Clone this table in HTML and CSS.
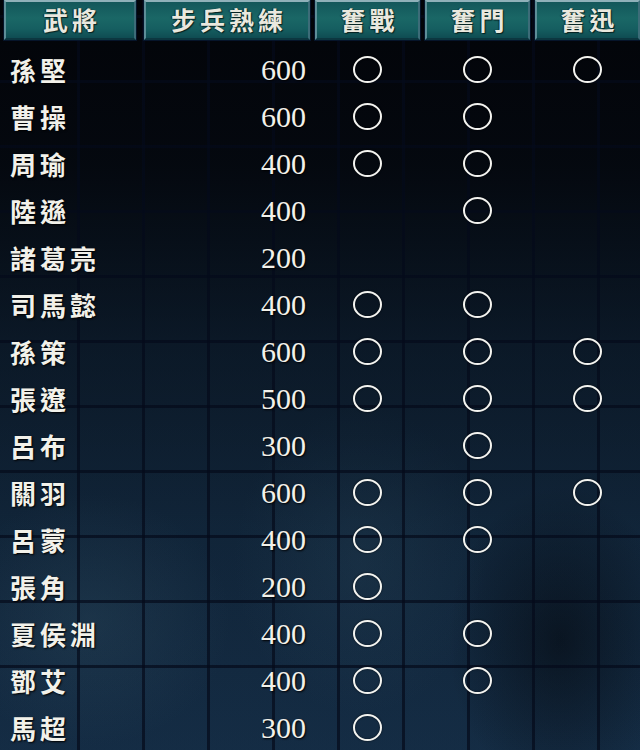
FILE: index.html
```html
<!DOCTYPE html>
<html lang="zh-Hant">
<head>
<meta charset="utf-8">
<title>步兵熟練</title>
<link rel="stylesheet" href="styles.css">
</head>
<body>
<div class="board">
  <div class="table">
    <div class="tab tab-first">武將</div>
    <div class="tab">步兵熟練</div>
    <div class="tab">奮戰</div>
    <div class="tab">奮門</div>
    <div class="tab">奮迅</div>

    <div class="name">孫堅</div><div class="num">600</div><div class="mark"><span class="ring"></span></div><div class="mark"><span class="ring"></span></div><div class="mark"><span class="ring"></span></div>
    <div class="name">曹操</div><div class="num">600</div><div class="mark"><span class="ring"></span></div><div class="mark"><span class="ring"></span></div><div class="mark"></div>
    <div class="name">周瑜</div><div class="num">400</div><div class="mark"><span class="ring"></span></div><div class="mark"><span class="ring"></span></div><div class="mark"></div>
    <div class="name">陸遜</div><div class="num">400</div><div class="mark"></div><div class="mark"><span class="ring"></span></div><div class="mark"></div>
    <div class="name">諸葛亮</div><div class="num">200</div><div class="mark"></div><div class="mark"></div><div class="mark"></div>
    <div class="name">司馬懿</div><div class="num">400</div><div class="mark"><span class="ring"></span></div><div class="mark"><span class="ring"></span></div><div class="mark"></div>
    <div class="name">孫策</div><div class="num">600</div><div class="mark"><span class="ring"></span></div><div class="mark"><span class="ring"></span></div><div class="mark"><span class="ring"></span></div>
    <div class="name">張遼</div><div class="num">500</div><div class="mark"><span class="ring"></span></div><div class="mark"><span class="ring"></span></div><div class="mark"><span class="ring"></span></div>
    <div class="name">呂布</div><div class="num">300</div><div class="mark"></div><div class="mark"><span class="ring"></span></div><div class="mark"></div>
    <div class="name">關羽</div><div class="num">600</div><div class="mark"><span class="ring"></span></div><div class="mark"><span class="ring"></span></div><div class="mark"><span class="ring"></span></div>
    <div class="name">呂蒙</div><div class="num">400</div><div class="mark"><span class="ring"></span></div><div class="mark"><span class="ring"></span></div><div class="mark"></div>
    <div class="name">張角</div><div class="num">200</div><div class="mark"><span class="ring"></span></div><div class="mark"></div><div class="mark"></div>
    <div class="name">夏侯淵</div><div class="num">400</div><div class="mark"><span class="ring"></span></div><div class="mark"><span class="ring"></span></div><div class="mark"></div>
    <div class="name">鄧艾</div><div class="num">400</div><div class="mark"><span class="ring"></span></div><div class="mark"><span class="ring"></span></div><div class="mark"></div>
    <div class="name">馬超</div><div class="num">300</div><div class="mark"><span class="ring"></span></div><div class="mark"></div><div class="mark"></div>
  </div>
</div>
</body>
</html>
```

FILE: styles.css
```css
html, body {
  margin: 0;
  padding: 0;
}

body {
  width: 640px;
  height: 750px;
  overflow: hidden;
  background: #05080d;
}

.board {
  width: 640px;
  height: 750px;
  overflow: hidden;
  background-color: #0b1724;
  background-image:
    repeating-linear-gradient(to right, transparent 0, transparent 62px, rgba(4, 10, 26, 0.7) 62px, rgba(4, 10, 26, 0.7) 65px),
    repeating-linear-gradient(to bottom, transparent 0, transparent 62px, rgba(4, 10, 26, 0.7) 62px, rgba(4, 10, 26, 0.7) 65px),
    linear-gradient(to bottom, rgba(2, 3, 7, 0.97) 0%, rgba(3, 5, 10, 0.88) 22%, rgba(5, 10, 18, 0.5) 45%, rgba(6, 12, 20, 0.2) 70%, rgba(6, 12, 20, 0.1) 100%),
    radial-gradient(ellipse 200px 180px at 90px 620px, rgba(55, 90, 112, 0.32), transparent 70%),
    radial-gradient(ellipse 180px 220px at 360px 560px, rgba(50, 85, 108, 0.28), transparent 70%),
    radial-gradient(ellipse 160px 220px at 560px 640px, rgba(4, 8, 14, 0.6), transparent 70%),
    linear-gradient(to bottom, #0d1e2e, #16304a);
  background-position: 15px 0, 0 -47px, 0 0, 0 0, 0 0, 0 0, 0 0;
}

.table {
  display: grid;
  grid-template-columns: 135px 166px 105px 105px 105px;
  grid-auto-rows: 47px;
  grid-template-rows: 46px;
  column-gap: 5px;
  padding-left: 4px;
}

.tab {
  height: 40px;
  box-sizing: border-box;
  border-top: 2px solid #8fb1b9;
  border-left: 2px solid #5d8e98;
  border-right: 2px solid #3c6c78;
  border-bottom: 2px solid #0c3740;
  background: linear-gradient(to bottom, #13575a 0%, #1a6766 45%, #155e60 75%, #0f4c52 100%);
  box-shadow: 0 0 0 1px #06142a;
  color: #e9e8de;
  font-family: "Noto Sans CJK TC", "Noto Sans CJK SC", sans-serif;
  font-weight: 700;
  font-size: 25px;
  letter-spacing: 4px;
  text-indent: 4px;
  line-height: 35px;
  text-align: center;
  text-shadow: 1px 1px 1px #062020, -1px 0 1px #0a2a2c;
}

.tab-first {
  margin-right: 3px;
}

.name {
  padding-left: 6px;
  color: #f2f1ea;
  font-family: "Noto Sans CJK TC", "Noto Sans CJK SC", sans-serif;
  font-weight: 700;
  font-size: 26px;
  letter-spacing: 4px;
  line-height: 47px;
  white-space: nowrap;
  text-shadow: 1px 1px 2px #000;
}

.num {
  padding-right: 4px;
  text-align: right;
  color: #f2f1ea;
  font-family: "Liberation Serif", serif;
  font-size: 30px;
  letter-spacing: 0;
  line-height: 47px;
  text-shadow: 1px 1px 2px #000;
}

.mark {
  display: flex;
  align-items: center;
  justify-content: center;
}

.ring {
  display: block;
  width: 25px;
  height: 23px;
  border: 2px solid #f4f4f0;
  border-radius: 50%;
  box-shadow: 0 0 2px rgba(0, 0, 0, 0.8), inset 0 0 2px rgba(0, 0, 0, 0.6);
}
```
